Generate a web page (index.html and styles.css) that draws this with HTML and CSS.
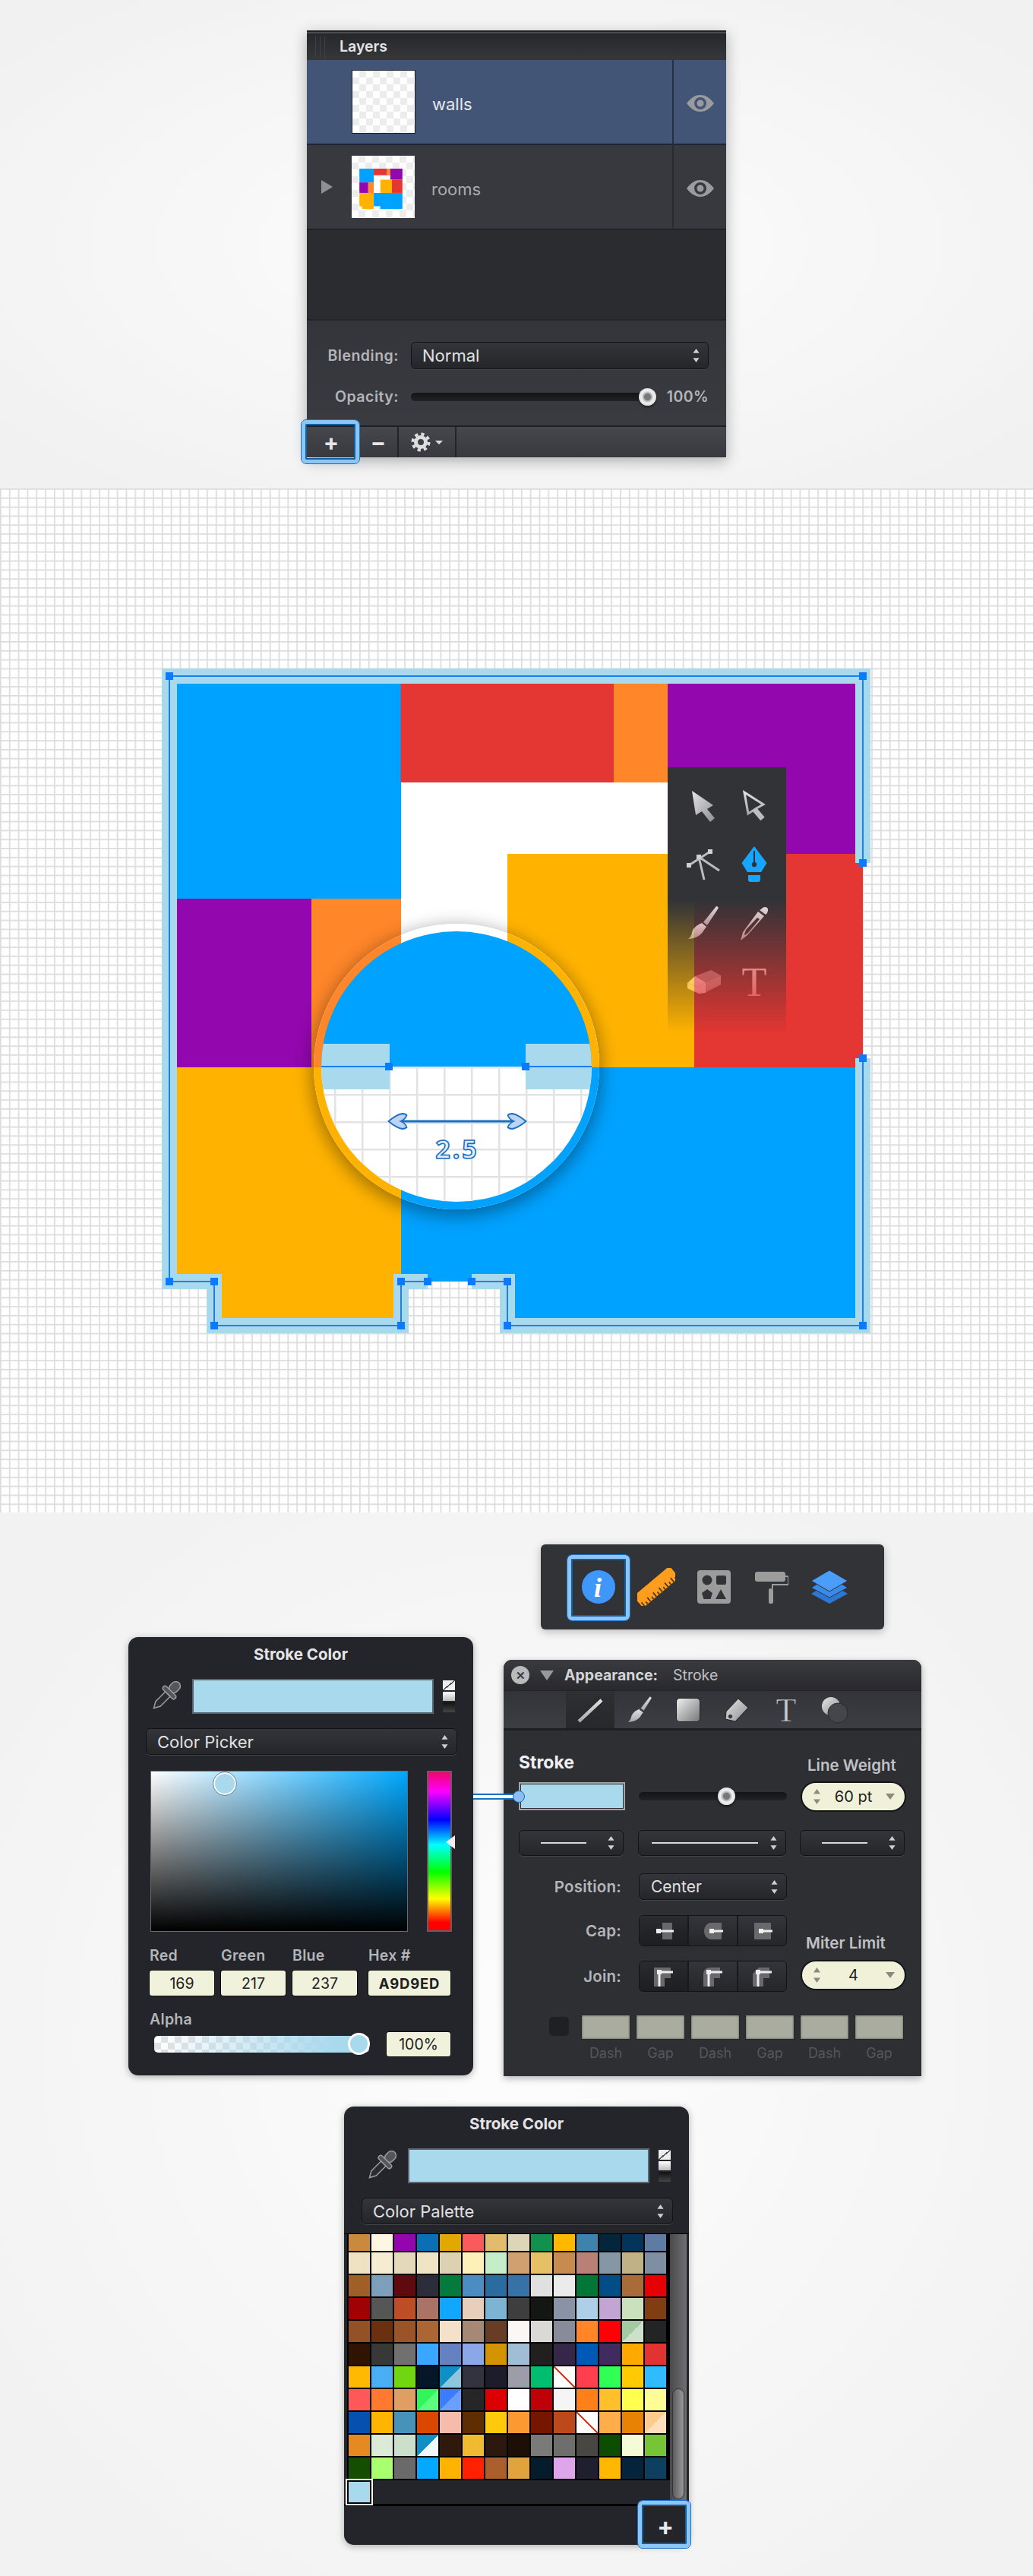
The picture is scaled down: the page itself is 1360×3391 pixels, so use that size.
FILE: index.html
```html
<!DOCTYPE html>
<html lang="en">
<head>
    <meta charset="UTF-8">
    <title>Floor plan walls</title>
    <link rel="stylesheet" href="styles.css">
</head>
<body>
    <svg class="defs" width="0" height="0">
        <symbol id="updown" viewBox="0 0 10 20"><path d="M5 0l4.500 6.500h-9zM5 20l-4.500-6.500h9z"/></symbol>
        <symbol id="dropper" viewBox="0 0 40 40">
            <g transform="rotate(45 20 20)">
                <rect x="14" y="-5" width="12" height="16" rx="6" fill="#55565b" stroke="#9a9ba0" stroke-width="1.500"/>
                <rect x="9" y="10" width="22" height="6" rx="3" fill="#55565b" stroke="#9a9ba0" stroke-width="1.500"/>
                <path d="M15.500 16h9v18l-4.500 8-4.500-8z" fill="#2a2b30" stroke="#9a9ba0" stroke-width="1.500"/>
            </g>
        </symbol>
        <symbol id="eye" viewBox="0 0 36 22">
            <path fill-rule="evenodd" fill="#9a9b9e" d="M0 11C6 3 12 0 18 0s12 3 18 11c-6 8-12 11-18 11S6 19 0 11zm18-8a8 8 0 1 0 0 16 8 8 0 0 0 0-16zm0 3.500a4.500 4.500 0 1 1 0 9 4.500 4.500 0 0 1 0-9z"/>
        </symbol>
        <linearGradient id="steel" x1="0" y1="0" x2="1" y2="1"><stop offset="0" stop-color="#e4e4e4"/><stop offset="1" stop-color="#8f8f92"/></linearGradient>
        <linearGradient id="steel-up" x1="0" y1="0" x2="0" y2="1"><stop offset="0" stop-color="#e0e0e0"/><stop offset="1" stop-color="#a8a8aa"/></linearGradient>
    </svg>

    <section class="top">
        <div class="layers">
            <div class="layers-title"><span class="grip"></span>Layers</div>
            <div class="layer-row selected">
                <span class="disclosure"></span>
                <span class="thumb"></span>
                <span class="layer-name">walls</span>
                <span class="eye-cell"><svg class="eye"><use href="#eye"/></svg></span>
            </div>
            <div class="layer-row">
                <span class="disclosure"><i></i></span>
                <span class="thumb thumb-rooms">
                    <svg viewBox="223 890 913 855" width="57" height="53"><use href="#room-fills"/></svg>
                </span>
                <span class="layer-name dim">rooms</span>
                <span class="eye-cell"><svg class="eye"><use href="#eye"/></svg></span>
            </div>
            <div class="layers-empty"></div>
            <div class="blend">
                <label>Blending:</label>
                <div class="select blend-select">Normal<svg class="updown"><use href="#updown"/></svg></div>
                <label>Opacity:</label>
                <div class="opacity">
                    <div class="track opacity-track"><span class="knob"></span></div>
                    <span class="percent">100%</span>
                </div>
            </div>
            <div class="layers-tools">
                <div class="tool-btn plus-btn"><span>+</span><span class="focus-ring"></span></div>
                <div class="tool-btn minus-btn">−</div>
                <div class="tool-btn gear-btn">
                    <svg width="26" height="26" viewBox="0 0 26 26">
                        <circle cx="13" cy="13" r="6.500" fill="none" stroke="#ddd" stroke-width="5"/>
                        <circle cx="13" cy="13" r="10.500" fill="none" stroke="#ddd" stroke-width="4" stroke-dasharray="4.200 4.050"/>
                    </svg>
                    <i class="caret"></i>
                </div>
            </div>
        </div>
    </section>

    <section class="canvas">
        <svg class="plan" width="1360" height="1348" viewBox="0 643 1360 1348">
            <defs>
                <pattern id="grid" x="0" y="643" width="11.826" height="11.826" patternUnits="userSpaceOnUse">
                    <path d="M0 0H11.826M0 0V11.826" fill="none" stroke="#dcdcde" stroke-width="3.400"/>
                </pattern>
                <pattern id="grid-big" x="512" y="1404" width="36" height="36" patternUnits="userSpaceOnUse">
                    <path d="M0 0H36M0 0V36" fill="none" stroke="#e3e3e6" stroke-width="5"/>
                </pattern>
                <clipPath id="lens-outer"><circle cx="601" cy="1404" r="188"/></clipPath>
                <clipPath id="lens-inner"><circle cx="601" cy="1404" r="178"/></clipPath>
                <filter id="lens-shadow" x="-30%" y="-30%" width="160%" height="160%">
                    <feGaussianBlur stdDeviation="12"/>
                </filter>
                <g id="room-fills">
                    <rect x="527" y="1030" width="360" height="380" fill="#fff"/>
                    <rect x="223" y="890" width="305" height="293" fill="#00a2ff"/>
                    <rect x="527.500" y="890" width="281" height="140" fill="#e43632"/>
                    <rect x="808" y="890" width="71" height="140" fill="#ff8629"/>
                    <rect x="879" y="890" width="257" height="234" fill="#9307ae"/>
                    <rect x="668" y="1124" width="246" height="281" fill="#ffb300"/>
                    <rect x="914" y="1124" width="222" height="281" fill="#e43632"/>
                    <rect x="223" y="1183" width="187" height="222" fill="#9307ae"/>
                    <rect x="410" y="1183" width="118" height="222" fill="#ff8629"/>
                    <path d="M223 1405H528V1745H282V1687H223z" fill="#ffb300"/>
                    <path d="M528 1405H1136V1745H668V1687H528z" fill="#00a2ff"/>
                </g>
            </defs>
            <rect x="0" y="643" width="1360" height="1348" fill="#fff"/>
            <rect x="0" y="643" width="1360" height="1348" fill="url(#grid)"/>
            <use href="#room-fills"/>
            <g class="wall-stroke">
                <path d="M563 1687H528V1745H282V1687H223V890H1136V1136"/>
                <path d="M621 1687H668V1745H1136V1393"/>
            </g>
            <g class="wall-line">
                <path d="M563 1687H528V1745H282V1687H223V890H1136V1136"/>
                <path d="M621 1687H668V1745H1136V1393"/>
            </g>
            <g class="handles">
                <rect x="218" y="885"/><rect x="1131" y="885"/><rect x="1131" y="1131"/><rect x="1131" y="1388"/>
                <rect x="218" y="1682"/><rect x="277" y="1682"/><rect x="277" y="1740"/><rect x="523" y="1740"/>
                <rect x="523" y="1682"/><rect x="558" y="1682"/><rect x="616" y="1682"/><rect x="663" y="1682"/>
                <rect x="663" y="1740"/><rect x="1131" y="1740"/>
            </g>

            <circle cx="601" cy="1410" r="190" fill="#000" opacity=".38" filter="url(#lens-shadow)"/>
            <g clip-path="url(#lens-outer)">
                <rect x="400" y="1200" width="400" height="400" fill="#fff"/>
                <use href="#room-fills"/>
            </g>
            <g clip-path="url(#lens-inner)">
                <rect x="420" y="1220" width="362" height="184" fill="#00a2ff"/>
                <rect x="420" y="1404" width="362" height="184" fill="#fff"/>
                <rect x="420" y="1404" width="362" height="184" fill="url(#grid-big)"/>
                <rect x="420" y="1374" width="93" height="60" fill="#a9d9ed"/>
                <rect x="692" y="1374" width="90" height="60" fill="#a9d9ed"/>
                <path d="M420 1404H513M692 1404H782" stroke="#1a7ff0" stroke-width="2"/>
            </g>
            <g class="handles">
                <rect x="507" y="1399"/><rect x="687" y="1399"/>
            </g>
            <g class="measure">
                <path class="measure-glow" d="M525 1478.500H680"/>
                <path class="measure-bar" d="M525 1476H680"/>
                <path class="measure-head" d="M511.500 1476c6-5 12-9 18-10 3 0 5 1 6 2-1 3-3 6-8 8 5 2 7 5 8 8-1 1-3 2-6 2-6-1-12-5-18-10z"/>
                <path class="measure-head" d="M692.500 1476c-6-5-12-9-18-10-3 0-5 1-6 2 1 3 3 6 8 8-5 2-7 5-8 8 1 1 3 2 6 2 6-1 12-5 18-10z"/>
                <text class="measure-text" x="602" y="1525" text-anchor="middle">2.5</text>
            </g>
        </svg>

        <div class="tools-float">
            <svg viewBox="0 0 48 48"><path fill="url(#steel)" d="M9 4l28 19-8 5 10 12-6 5-11-14-8 5z"/></svg>
            <svg viewBox="0 0 48 48"><path fill="none" stroke="url(#steel-up)" stroke-width="3" d="M11 6l25 16-9 5-11 7z"/><path fill="none" stroke="#bdbdbd" stroke-width="7" d="M24 28l11 13"/></svg>
            <svg viewBox="0 0 48 48">
                <g stroke="#bcbcbe" stroke-width="3" fill="none"><path d="M5 25L33 7M18 14l7 30M18 14l27 18"/></g>
                <g fill="#d0d0d0"><rect x="2" y="22" width="6" height="6"/><rect x="30" y="4" width="6" height="6"/><rect x="15" y="11" width="6" height="6"/></g>
            </svg>
            <svg viewBox="0 0 48 48">
                <path fill="#16a6ff" d="M24 0l16.500 22L33 34H15L7.500 22z"/>
                <path stroke="#323337" stroke-width="2" d="M24 6v16"/>
                <circle cx="24" cy="24" r="3.200" fill="#323337"/>
                <path fill="#16a6ff" d="M16 38h16v6a3 3 0 0 1-3 3H19a3 3 0 0 1-3-3z"/>
            </svg>
            <svg viewBox="0 0 48 48">
                <path fill="url(#steel-up)" d="M41 2c2 0 3 1 2.500 3L29 27l-5-4z"/>
                <path fill="url(#steel-up)" d="M22 24l6 5-3 4c-2 4-6 8-11 10-3 1-7 2-10 2 3-2 4-4 5-8 1-6 6-10 13-13z"/>
            </svg>
            <svg viewBox="0 0 48 48">
                <path fill="url(#steel-up)" fill-rule="evenodd" d="M33 6c2-3 6-4 8-2s1 6-1 8l-1 1-8-6zM29 9l8 6-22 25-9 7 3-11zM13 33l-2 6 1 1 4-3 15-18-3-2z"/>
            </svg>
            <svg viewBox="0 0 48 48">
                <path fill="#8d8d90" d="M13 17l21-8 13 7-20 9z"/>
                <path fill="#a5a5a7" d="M27 25l20-9v12l-21 11z"/>
                <path fill="#ededed" d="M3 26l10-9 14 8-9 7z"/>
                <path fill="#f2f2f2" d="M3 26l15 6v8L3 33zM18 32l9-7v14l-9 1z"/>
            </svg>
            <svg viewBox="0 0 48 48"><text class="serif-t" x="24" y="43" text-anchor="middle">T</text></svg>
        </div>
    </section>

    <section class="bottom">
        <div class="app-bar">
            <div class="app-item">
                <span class="focus-ring app-focus"></span>
                <svg width="44" height="44" viewBox="0 0 44 44">
                    <circle cx="22" cy="22" r="22" fill="#3f97fc"/>
                    <text class="info-i" x="21" y="35" text-anchor="middle">i</text>
                </svg>
            </div>
            <div class="app-item">
                <svg width="50" height="50" viewBox="0 0 50 50">
                    <g transform="rotate(-40 25 25)">
                        <rect x="-6" y="15" width="62" height="20" fill="#ff9d1f"/>
                        <path d="M-3 35V28M2 35V31M7 35V28M12 35V31M17 35V28M22 35V31M27 35V28M32 35V31M37 35V28M42 35V31M47 35V28M52 35V31" stroke="#513a1a" stroke-width="1.800"/>
                    </g>
                </svg>
            </div>
            <div class="app-item">
                <svg width="44" height="44" viewBox="0 0 44 44">
                    <rect width="44" height="44" rx="4" fill="#9c9c9d"/>
                    <g fill="#323337">
                        <circle cx="13" cy="13" r="6.500"/>
                        <rect x="25" y="7" width="13" height="12" rx="2"/>
                        <path d="M13 25l7 5-2.500 8h-9L6 30z"/>
                        <path d="M31 25l7 13H24z"/>
                    </g>
                </svg>
            </div>
            <div class="app-item">
                <svg width="44" height="44" viewBox="0 0 44 44">
                    <rect x="0" y="2" width="40" height="13" rx="3" fill="#9c9c9d"/>
                    <path d="M40 8h2a2 2 0 0 1 2 2v7a2 2 0 0 1-2 2H23v5" fill="none" stroke="#9c9c9d" stroke-width="2"/>
                    <rect x="18" y="24" width="6" height="20" rx="2" fill="#9c9c9d"/>
                </svg>
            </div>
            <div class="app-item">
                <svg width="48" height="44" viewBox="0 0 48 44">
                    <path fill="#2b78d6" d="M24 16l24 15-24 13L0 31z"/>
                    <path fill="#3a8ae8" stroke="#323337" d="M24 8l24 15-24 13L0 23z"/>
                    <path fill="#4a9dfb" stroke="#323337" d="M24 0l24 14-24 14L0 14z"/>
                </svg>
            </div>
        </div>

        <div class="panels">
            <div class="picker">
                <h2 class="picker-title">Stroke Color</h2>
                <div class="well-row">
                    <svg class="dropper"><use href="#dropper"/></svg>
                    <div class="well"></div>
                    <div class="mini">
                        <span class="mini-none"></span><span class="mini-white"></span><span class="mini-black"></span>
                    </div>
                </div>
                <div class="select picker-select">Color Picker<svg class="updown"><use href="#updown"/></svg></div>
                <div class="spectrum">
                    <div class="sat"><span class="sat-knob"></span></div>
                    <div class="hue"><i></i></div>
                </div>
                <div class="fields">
                    <label>Red</label><label>Green</label><label>Blue</label><label>Hex #</label>
                    <div class="input">169</div><div class="input">217</div><div class="input">237</div><div class="input hex">A9D9ED</div>
                </div>
                <label class="alpha-label">Alpha</label>
                <div class="alpha-row">
                    <div class="alpha-track"><span class="alpha-knob"></span></div>
                    <div class="input alpha-input">100%</div>
                </div>
            </div>

            <div class="appearance">
                <div class="app-title">
                    <span class="close">✕</span>
                    <i class="tri-down"></i>
                    <b>Appearance:</b>
                    <span>Stroke</span>
                </div>
                <div class="tabs">
                    <div class="tab active"><svg width="36" height="36" viewBox="0 0 36 36"><path d="M3 33L33 5" stroke="#222" stroke-width="7"/><path d="M3 33L33 5" stroke="url(#steel-up)" stroke-width="4.500"/></svg></div>
                    <div class="tab"><svg width="38" height="38" viewBox="0 0 48 48"><path fill="url(#steel-up)" d="M41 2c2 0 3 1 2.500 3L31 25l-5-4z"/><path fill="url(#steel-up)" d="M22 22l8 6-3 4c-2 5-6 8-11 10-3 1-7 2-11 2 3-2 4-4 5-8 2-7 7-11 14-14z"/></svg></div>
                    <div class="tab"><span class="fill-tile"></span></div>
                    <div class="tab"><svg width="36" height="36" viewBox="0 0 36 36"><path fill="url(#steel)" stroke="#222" d="M20 3l13 12-17 18L3 30l1-10zM8 25a2 2 0 1 0 3 3 2 2 0 0 0-3-3z" fill-rule="evenodd"/></svg></div>
                    <div class="tab"><svg width="36" height="36" viewBox="0 0 36 36"><text class="serif-tab" x="18" y="33" text-anchor="middle">T</text></svg></div>
                    <div class="tab"><svg width="38" height="38" viewBox="0 0 38 38"><circle cx="14" cy="14" r="12" fill="url(#steel)"/><circle cx="23" cy="23" r="13" fill="#45464a" stroke="#2a2b2f"/></svg></div>
                </div>
                <div class="app-body">
                    <div class="row row-heads">
                        <b class="stroke-head">Stroke</b>
                        <b class="weight-head">Line Weight</b>
                    </div>
                    <div class="row row-stroke">
                        <div class="stroke-well"></div>
                        <div class="track stroke-track"><span class="knob"></span></div>
                        <div class="pill"><svg class="updown"><use href="#updown"/></svg><span>60 pt</span><i></i></div>
                    </div>
                    <div class="row row-lines">
                        <div class="select short"><span class="dash-sample"></span><svg class="updown"><use href="#updown"/></svg></div>
                        <div class="select wide"><span class="dash-sample long"></span><svg class="updown"><use href="#updown"/></svg></div>
                        <div class="select short"><span class="dash-sample"></span><svg class="updown"><use href="#updown"/></svg></div>
                    </div>
                    <div class="row row-position">
                        <label class="side-label">Position:</label>
                        <div class="select wide center-select">Center<svg class="updown"><use href="#updown"/></svg></div>
                    </div>
                    <div class="row row-caps">
                        <div class="caps">
                            <div class="cap-row">
                                <label class="side-label">Cap:</label>
                                <div class="segments">
                                    <div class="segment on"><svg width="30" height="26" viewBox="0 0 30 26"><rect x="13" y="2" width="13" height="22" fill="#69696b"/><path d="M8 13h20" stroke="#eee" stroke-width="3"/><rect x="5" y="10" width="6" height="6" fill="#eee"/></svg></div>
                                    <div class="segment"><svg width="30" height="26" viewBox="0 0 30 26"><path d="M26 2H13C6 2 3 8 3 13s3 11 10 11h13z" fill="#69696b"/><path d="M14 13h14" stroke="#eee" stroke-width="3"/><rect x="10" y="10" width="6" height="6" fill="#eee"/></svg></div>
                                    <div class="segment"><svg width="30" height="26" viewBox="0 0 30 26"><rect x="4" y="2" width="22" height="22" fill="#69696b"/><path d="M14 13h14" stroke="#eee" stroke-width="3"/><rect x="10" y="10" width="6" height="6" fill="#eee"/></svg></div>
                                </div>
                            </div>
                            <div class="cap-row join-row">
                                <label class="side-label">Join:</label>
                                <div class="segments">
                                    <div class="segment on"><svg width="30" height="30" viewBox="0 0 30 30"><path d="M2 3h22v14H16v11H2z" fill="#69696b"/><path d="M9 28V9h18" fill="none" stroke="#eee" stroke-width="3"/><rect x="6" y="6" width="6" height="6" fill="#eee"/></svg></div>
                                    <div class="segment"><svg width="30" height="30" viewBox="0 0 30 30"><path d="M2 28V12c0-6 4-9 9-9h13v14h-8v11z" fill="#69696b"/><path d="M9 28V9h18" fill="none" stroke="#eee" stroke-width="3"/><rect x="6" y="6" width="6" height="6" fill="#eee"/></svg></div>
                                    <div class="segment"><svg width="30" height="30" viewBox="0 0 30 30"><path d="M2 28V11l8-8h14v14h-8v11z" fill="#69696b"/><path d="M9 28V9h18" fill="none" stroke="#eee" stroke-width="3"/><rect x="6" y="6" width="6" height="6" fill="#eee"/></svg></div>
                                </div>
                            </div>
                        </div>
                        <div class="miter">
                            <b class="weight-head">Miter Limit</b>
                            <div class="pill"><svg class="updown"><use href="#updown"/></svg><span>4</span><i></i></div>
                        </div>
                    </div>
                    <div class="row row-dashes">
                        <span class="dash-check"></span>
                        <div class="dash-grid">
                            <div><span class="dash-box"></span>Dash</div>
                            <div><span class="dash-box"></span>Gap</div>
                            <div><span class="dash-box"></span>Dash</div>
                            <div><span class="dash-box"></span>Gap</div>
                            <div><span class="dash-box"></span>Dash</div>
                            <div><span class="dash-box"></span>Gap</div>
                        </div>
                    </div>
                </div>
            </div>
            <span class="connector"></span>
        </div>

        <div class="picker palette-picker">
            <h2 class="picker-title">Stroke Color</h2>
            <div class="well-row">
                <svg class="dropper"><use href="#dropper"/></svg>
                <div class="well"></div>
                <div class="mini">
                    <span class="mini-none"></span><span class="mini-white"></span><span class="mini-black"></span>
                </div>
            </div>
            <div class="select picker-select">Color Palette<svg class="updown"><use href="#updown"/></svg></div>
            <div class="palette">
                <div class="palette-main">
                    <div class="swatches" id="swatches"></div>
                    <div class="picked"></div>
                </div>
                <div class="scrollbar"><span></span></div>
            </div>
            <div class="palette-foot">
                <div class="foot-plus"><span>+</span><span class="focus-ring"></span></div>
            </div>
        </div>
    </section>

    <script>
        const colors = [
            '#c98a3e','#fdf6e3','#9306ad','#0a6fb5','#e0a800','#fa5a5a','#e3bb6d','#ddd5b8','#12914e','#ffb800','#3f82ab','#04263d','#04345a','#5d7ba3',
            '#efe2c2','#f6ecd2','#e4dabb','#efe4c3','#dcd2b2','#fff0b8','#c5eec8','#d1a070','#e6c065','#c78a4f','#b98078','#8596a5','#c0b186','#7d8fa0',
            '#a05f27','#7d9fbc','#5e0a0e','#2b2d3a','#047a3c','#4b8dc2','#2a6ba0','#3672a5','#e0e0e0','#ebebeb','#027636','#034d87','#a96c38','#e60003',
            '#a00203','#565656','#bc4d26','#ab7266','#11a6ff','#e8cfbc','#7db4d3','#3e3e3e','#141614','#8a92a5','#add0e8','#c3a5d5','#cbe0bc','#7e3e12',
            '#935126','#6b3010','#9a5428','#ab6633','#f5e0ca','#a58974','#673e25','#faf7f4','#dbd9d6','#888b9a','#ff8527','#ff0006','#a3cba3/#cde0ca','#222425',
            '#301300','#383838','#707070','#3aa6ff','#6481c2','#8aa8e8','#d49300','#9fbdd5','#22201e','#362648','#0059b5','#412a5e','#ffa800','#e33232',
            '#ffb900','#4aaef5','#6fd610','#051726','#0e90c6/#8fc5dd','#33323f','#1c1c2a','#9c9da8','#00bd70','none','#ff3f50','#32ff55','#ffcb00','#30baff',
            '#ff5858','#ff7a2f','#e09e62','#32f558/#5bff7d','#3a7dff/#6a9fff','#262626','#dc0000','#ffffff','#c00008','#f5f5f5','#ff8018','#ffc02c','#ffff50','#fdfd96',
            '#0650b0','#ffb400','#4692b8','#dc4700','#f6bcab','#5e2d00','#ffc90c','#fb9a31','#771600','#bd481a','none','#ffac4a','#e88207','#ffcb8c/#fedfbb',
            '#e48a21','#dcebd8','#cbdfcb','#0e90c6/#f0f8fb','#2f190c','#f0bb30','#2c180e','#1e0f06','#7a7a78','#6e6e6c','#494742','#0c4d00','#f3fbd7','#76c536',
            '#144e00','#a8ff70','#6a6a6a','#03a8ff','#ffb300','#ff2100','#aa5f2c','#e1a43c','#041c2c','#dfa5eb','#1f1f30','#ffb700','#03243a','#0d4060'
        ];

        const swatches = document.getElementById('swatches');
        colors.forEach(function (color) {
            const cell = document.createElement('span');
            if (color === 'none') {
                cell.className = 'swatch-none';
            } else if (color.includes('/')) {
                const parts = color.split('/');
                cell.style.background = `linear-gradient(to bottom right, ${parts[0]} 50%, ${parts[1]} 50%)`;
            } else {
                cell.style.background = color;
            }
            swatches.appendChild(cell);
        });
    </script>
</body>
</html>
```

FILE: styles.css
```css
* {
    box-sizing: border-box;
}
body {
    margin: 0;
    width: 1360px;
    font-family: Inter, "Liberation Sans", sans-serif;
    color: #d8d8da;
}
.defs {
    position: absolute;
}
label {
    font-weight: 600;
    color: #b4b5b9;
}

/* layers panel */
.top {
    height: 643px;
    padding-top: 40px;
    display: flex;
    justify-content: center;
    align-items: flex-start;
    background: radial-gradient(ellipse at center, #fdfdfd, #f1f1f1 90%);
}
.layers {
    width: 552px;
    height: 562px;
    background: #2b2c30;
    box-shadow: 0 5px 18px rgba(0, 0, 0, 0.3);
}
.layers-title {
    height: 39px;
    display: flex;
    align-items: center;
    padding-left: 43px;
    position: relative;
    font-size: 19.500px;
    font-weight: 600;
    color: #e4e4e6;
    background: linear-gradient(#26272b, #36373b);
    border-top: 2px solid #202124;
    box-shadow: inset 0 2px 0 #4a4b4f;
}
.grip {
    position: absolute;
    left: 11px;
    top: 6px;
    width: 18px;
    height: 28px;
    background: repeating-linear-gradient(90deg, #3f4044 0 1px, transparent 1px 6px);
}
.layer-row {
    height: 112px;
    display: flex;
    align-items: center;
    background: #38393e;
    border-bottom: 2px solid #232428;
}
.layer-row.selected {
    background: #425577;
    border-bottom-color: #1d2638;
}
.disclosure {
    width: 59px;
    padding-left: 19px;
    display: flex;
}
.disclosure i {
    border-left: 15px solid #8f9093;
    border-top: 9px solid transparent;
    border-bottom: 9px solid transparent;
}
.thumb {
    width: 84px;
    height: 84px;
    border: 1px solid #1f2024;
    background-color: #fff;
    background-image: conic-gradient(#ececec 25%, transparent 0 50%, #ececec 0 75%, transparent 0);
    background-size: 18px 18px;
}
.thumb-rooms {
    border: 0;
    width: 83px;
    height: 82px;
    display: flex;
    padding: 17px 0 0 10px;
}
.layer-name {
    margin: 5px 0 0 22px;
    font-size: 22px;
    color: #e6e7ea;
}
.layer-name.dim {
    color: #a9aaad;
}
.eye-cell {
    margin-left: auto;
    width: 71px;
    align-self: stretch;
    padding-top: 3px;
    border-left: 2px solid #2a2b2f;
    display: flex;
    align-items: center;
    justify-content: center;
}
.selected .eye-cell {
    border-left-color: #253047;
}
.eye {
    width: 36px;
    height: 22px;
}
.layers-empty {
    height: 119px;
    border-bottom: 2px solid #232428;
}
.blend {
    height: 138px;
    padding: 28px 0 0 0;
    display: grid;
    grid-template-columns: 121px 392px;
    grid-template-rows: 36px 22px;
    column-gap: 16px;
    row-gap: 25px;
    align-items: center;
    background: linear-gradient(#34353a, #3a3b40);
}
.blend label {
    text-align: right;
    font-size: 19.500px;
    letter-spacing: 0.5px;
}
.select {
    position: relative;
    display: flex;
    align-items: center;
    background: linear-gradient(#34353a, #25262a);
    border: 1px solid #121316;
    border-radius: 6px;
    color: #e0e0e2;
    font-size: 22px;
    box-shadow: 0 1px 0 #45464a;
}
.blend-select {
    height: 36px;
    padding-left: 14px;
}
.updown {
    position: absolute;
    right: 11px;
    top: 50%;
    width: 9px;
    height: 20px;
    margin-top: -10px;
    fill: #cfcfd1;
}
.opacity {
    display: flex;
    align-items: center;
    justify-content: space-between;
}
.track {
    position: relative;
    height: 11px;
    border-radius: 6px;
    background: linear-gradient(#121315, #222327);
}
.opacity-track {
    width: 312px;
}
.knob {
    position: absolute;
    top: 50%;
    width: 23px;
    height: 23px;
    margin-top: -11.500px;
    border-radius: 50%;
    background: radial-gradient(circle, #77787a 0 4px, #a9a9ab 5px, #f0f0f0 8px, #c9c9c9);
    box-shadow: 0 2px 3px rgba(0, 0, 0, 0.5);
}
.opacity-track .knob {
    right: -11px;
}
.percent {
    font-size: 19.500px;
    font-weight: 600;
    color: #b4b5b9;
    letter-spacing: 0.4px;
}
.layers-tools {
    height: 42px;
    display: flex;
    background: linear-gradient(#46474c, #38393e);
    border-top: 2px solid #1f2023;
}
.tool-btn {
    position: relative;
    height: 40px;
    display: flex;
    align-items: center;
    justify-content: center;
    color: #e6e6e8;
    font-size: 30px;
    line-height: 40px;
    font-weight: 700;
    border-right: 2px solid #232428;
}
.plus-btn {
    width: 69px;
    border-right: 0;
    padding-right: 5px;
}
.minus-btn {
    width: 52px;
}
.gear-btn {
    width: 76px;
    gap: 6px;
}
.caret {
    border-top: 5px solid #ddd;
    border-left: 5px solid transparent;
    border-right: 5px solid transparent;
}
.focus-ring {
    position: absolute;
    left: -7px;
    right: 0;
    top: -9px;
    bottom: -8px;
    border: 5px solid #8cc6f8;
    border-radius: 6px;
    outline: 1.500px solid #1a70c4;
    box-shadow: inset 0 0 0 2px #14609f;
}

/* drawing */
.canvas {
    position: relative;
    height: 1348px;
}
.plan {
    display: block;
}
.wall-stroke path {
    fill: none;
    stroke: #a9d9ed;
    stroke-width: 20;
}
.wall-line path {
    fill: none;
    stroke: #1a7ff0;
    stroke-width: 2;
}
.handles rect {
    width: 10px;
    height: 10px;
    fill: #0a7bff;
}
.measure-bar {
    stroke: #1a6fc0;
    stroke-width: 3;
}
.measure-glow {
    stroke: #d5e4f7;
    stroke-width: 3;
}
.measure-head {
    fill: #bcd3f3;
    stroke: #1a6fc0;
    stroke-width: 1.800;
}
.measure-text {
    font-family: "Open Sans", sans-serif;
    font-size: 34px;
    font-weight: 700;
    letter-spacing: 3px;
    fill: #dcedfb;
    stroke: #1a6fc0;
    stroke-width: 1.600;
}
.tools-float {
    position: absolute;
    left: 879px;
    top: 367px;
    width: 156px;
    height: 350px;
    padding: 12px 0 0 13px;
    display: grid;
    grid-template-columns: repeat(2, 67px);
    grid-auto-rows: 77px;
    align-items: center;
    justify-items: center;
    background: #323337;
    box-shadow: 0 0 14px rgba(0, 0, 0, 0.25);
    -webkit-mask-image: linear-gradient(#000 50%, transparent 100%);
    mask-image: linear-gradient(#000 50%, transparent 100%);
}
.tools-float svg {
    width: 48px;
    height: 48px;
}
.serif-t {
    font-family: "Liberation Serif", serif;
    font-size: 54px;
    fill: #e0e0e0;
}
.serif-tab {
    font-family: "Liberation Serif", serif;
    font-size: 44px;
    fill: #c9c9cb;
    stroke: #222;
    stroke-width: 0.500;
}

/* lower panels */
.bottom {
    height: 1400px;
    padding-top: 42px;
    background: radial-gradient(ellipse at center, #fdfdfd, #f2f2f2 85%);
}
.app-bar {
    width: 452px;
    height: 112px;
    margin-left: 712px;
    padding-left: 38px;
    display: flex;
    background: #323337;
    border-radius: 6px;
    box-shadow: 0 3px 12px rgba(0, 0, 0, 0.25);
}
.app-item {
    position: relative;
    width: 76px;
    display: flex;
    align-items: center;
    justify-content: center;
}
.app-focus {
    left: -3px;
    right: -3px;
    top: 14px;
    bottom: 12px;
}
.info-i {
    font-family: "Liberation Serif", serif;
    font-style: italic;
    font-weight: 700;
    font-size: 36px;
    fill: #fff;
}
.panels {
    position: relative;
    display: flex;
    align-items: flex-start;
    gap: 40px;
    margin: 10px 0 0 169px;
}
.picker {
    width: 454px;
    height: 577px;
    background: #24252a;
    border-radius: 13px;
    box-shadow: 0 2px 10px rgba(0, 0, 0, 0.3);
}
.picker-title {
    margin: 0;
    height: 55px;
    padding-top: 11px;
    text-align: center;
    font-size: 20.500px;
    line-height: 24px;
    font-weight: 700;
    color: #e4e4e6;
}
.well-row {
    height: 46px;
    display: flex;
    align-items: center;
    padding-left: 29px;
}
.dropper {
    width: 40px;
    height: 40px;
}
.well {
    width: 318px;
    height: 46px;
    margin-left: 15px;
    background: #a9d9ed;
    border: 2px solid #5c6570;
}
.mini {
    width: 16px;
    margin-left: 12px;
    display: flex;
    flex-direction: column;
    gap: 2px;
}
.mini span {
    height: 12.500px;
}
.mini-none {
    background: linear-gradient(to top left, #eee 46%, #555 46% 54%, #eee 54%);
}
.mini-white {
    background: linear-gradient(#fff, #bbb);
}
.mini-black {
    background: linear-gradient(#111, #444);
}
.picker-select {
    width: 410px;
    height: 35px;
    margin: 19px 0 0 23px;
    padding-left: 14px;
    font-size: 22px;
}
.spectrum {
    display: flex;
    gap: 25px;
    margin: 21px 0 0 29px;
}
.sat {
    position: relative;
    width: 339px;
    height: 212px;
    border: 1.500px solid #6a6b70;
    background: linear-gradient(to top, #000, rgba(0, 0, 0, 0)), linear-gradient(to right, #fff, #00a8ff);
}
.sat-knob {
    position: absolute;
    left: 82px;
    top: 1px;
    width: 30px;
    height: 30px;
    border-radius: 50%;
    border: 2px solid #fff;
    outline: 1px solid #6a8a9c;
    background: #a9d9ed;
}
.hue {
    position: relative;
    width: 33px;
    height: 212px;
    border: 2px solid #6a5c62;
    background: linear-gradient(#f0056a, #f0f 12%, #00f 30%, #0ff 46%, #0f0 63%, #ff0 80%, #f00 95%);
}
.hue i {
    position: absolute;
    left: 23px;
    top: 83px;
    border-right: 12px solid #eee;
    border-top: 9px solid transparent;
    border-bottom: 9px solid transparent;
}
.fields {
    display: grid;
    grid-template-columns: 85px 85px 85px 108px;
    grid-template-rows: 18px 33px;
    column-gap: 9px;
    row-gap: 11px;
    margin: 22px 0 0 28px;
}
.fields label {
    font-size: 19.500px;
    line-height: 18px;
    letter-spacing: 0.3px;
}
.fields label:last-of-type {
    margin-left: 6px;
}
.input {
    display: flex;
    align-items: center;
    justify-content: center;
    background: #f0f2dc;
    border-radius: 3px;
    color: #202020;
    font-size: 19.500px;
    box-shadow: 0 0 0 1px #111;
}
.fields .hex {
    margin-left: 6px;
    width: 108px;
    font-weight: 700;
    font-size: 18.500px;
    letter-spacing: 0.8px;
}
.alpha-label {
    display: block;
    margin: 22px 0 0 28px;
    font-size: 19.500px;
    line-height: 18px;
    letter-spacing: 0.3px;
}
.alpha-row {
    display: flex;
    align-items: center;
    margin: 8px 0 0 34px;
}
.alpha-track {
    position: relative;
    width: 283px;
    height: 22px;
    border-radius: 5px;
    background-image: linear-gradient(to right, rgba(169, 217, 237, 0), #a9d9ed 85%), conic-gradient(#e2e2e2 25%, #fff 0 50%, #e2e2e2 0 75%, #fff 0);
    background-size: auto, 18px 18px;
}
.alpha-knob {
    position: absolute;
    right: -1px;
    top: -4px;
    width: 29px;
    height: 29px;
    border-radius: 50%;
    background: #a9d9ed;
    border: 3px solid #fff;
}
.alpha-input {
    width: 84px;
    height: 32px;
    margin-left: 23px;
}

/* appearance panel */
.appearance {
    width: 550px;
    height: 548px;
    margin-top: 30px;
    background: #2e2f33;
    border-radius: 11px 11px 0 0;
    box-shadow: 0 3px 10px rgba(0, 0, 0, 0.3);
}
.app-title {
    height: 40px;
    display: flex;
    align-items: center;
    font-size: 19.500px;
    color: #bfc0c3;
    background: linear-gradient(#3a3b3f, #29292d);
    border-radius: 11px 11px 0 0;
}
.app-title b {
    margin: 0 20px 0 14px;
    font-weight: 700;
    color: #d4d5d7;
}
.close {
    width: 24px;
    height: 24px;
    margin-left: 10px;
    border-radius: 50%;
    background: #b9babc;
    color: #3a3b3f;
    font-size: 15px;
    font-weight: 700;
    display: flex;
    align-items: center;
    justify-content: center;
}
.tri-down {
    margin-left: 14px;
    border-top: 13px solid #97989b;
    border-left: 9px solid transparent;
    border-right: 9px solid transparent;
}
.tabs {
    height: 53px;
    padding-left: 82px;
    display: flex;
    background: linear-gradient(#33343a, #3d3e44);
    border-top: 1px solid #232428;
    border-bottom: 3px solid #1e1f22;
}
.tab {
    width: 64.400px;
    display: flex;
    align-items: center;
    justify-content: center;
}
.tab.active {
    background: linear-gradient(#2e2f33, #27282c);
}
.fill-tile {
    width: 32px;
    height: 32px;
    border-radius: 5px;
    border: 1px solid #222;
    background: linear-gradient(135deg, #eee, #77787a);
}
.app-body {
    padding: 29px 0 0 20px;
}
.row {
    display: flex;
    align-items: flex-start;
}
.row-heads {
    height: 29px;
    justify-content: space-between;
    padding-right: 20px;
}
.stroke-head {
    font-size: 23px;
    line-height: 26px;
    font-weight: 700;
    color: #f0f0f2;
}
.weight-head {
    display: block;
    width: 130px;
    font-size: 20.500px;
    line-height: 24px;
    font-weight: 600;
    color: #c0c1c4;
    white-space: nowrap;
}
.row-heads .weight-head {
    margin-top: 5px;
}
.row-stroke {
    margin-top: 10px;
    align-items: center;
}
.stroke-well {
    width: 140px;
    height: 37px;
    background: #a9d9ed;
    border: 3px solid #2e2f33;
    outline: 2px solid #a5a6a8;
    outline-offset: -2px;
}
.stroke-track {
    width: 195px;
    margin: 0 20px 0 18px;
}
.stroke-track .knob {
    left: 104px;
}
.pill {
    position: relative;
    width: 135px;
    height: 36px;
    display: flex;
    align-items: center;
    justify-content: center;
    border-radius: 18px;
    background: #f0f1d8;
    color: #202020;
    font-size: 20px;
    box-shadow: 0 0 0 2px #141518;
}
.pill .updown {
    right: auto;
    left: 14px;
    fill: #8a8b80;
    width: 11px;
}
.pill i {
    position: absolute;
    right: 13px;
    top: 14px;
    border-top: 8px solid #8a8b80;
    border-left: 6px solid transparent;
    border-right: 6px solid transparent;
}
.row-lines {
    margin-top: 26px;
}
.short {
    width: 138px;
    height: 34px;
    padding-left: 28px;
}
.wide {
    width: 195px;
    height: 34px;
    padding-left: 17px;
}
.row-lines .wide {
    margin: 0 18px 0 19px;
}
.dash-sample {
    width: 60px;
    height: 2px;
    background: #d8d8da;
}
.dash-sample.long {
    width: 140px;
}
.row-position {
    margin-top: 23px;
    align-items: center;
}
.side-label {
    width: 135px;
    margin-right: 23px;
    text-align: right;
    font-size: 20.500px;
    letter-spacing: 0.2px;
}
.center-select {
    height: 35px;
    padding-left: 15px;
    font-size: 21px;
}
.row-caps {
    margin-top: 20px;
}
.cap-row {
    display: flex;
    align-items: center;
}
.join-row {
    margin-top: 19px;
}
.segments {
    width: 195px;
    height: 41px;
    display: flex;
    border: 1px solid #121316;
    border-radius: 6px;
    background: linear-gradient(#34353a, #25262a);
    overflow: hidden;
}
.segment {
    flex: 1;
    display: flex;
    align-items: center;
    justify-content: center;
    border-left: 2px solid #18191c;
}
.segment:first-child {
    border-left: 0;
}
.segment.on {
    background: linear-gradient(#2a2b2f, #1d1e21);
}
.miter {
    margin: 25px 0 0 20px;
}
.miter .weight-head {
    margin-left: 5px;
}
.miter .pill {
    margin-top: 12px;
}
.row-dashes {
    margin-top: 31px;
    padding-left: 40px;
}
.dash-check {
    width: 26px;
    height: 25px;
    margin-top: 2px;
    border-radius: 5px;
    background: #1f2024;
}
.dash-grid {
    display: grid;
    grid-template-columns: repeat(6, 63px);
    column-gap: 9px;
    margin-left: 17px;
    font-size: 18px;
    line-height: 20px;
    text-align: center;
    color: #55565a;
}
.dash-box {
    display: block;
    height: 31px;
    margin-bottom: 9px;
    background: #a9ac9e;
    box-shadow: inset 0 0 3px #55564e, 0 0 0 1px #26272a;
}
.connector {
    position: absolute;
    left: 454px;
    top: 206px;
    width: 61px;
    height: 8px;
    background: #fff;
    border-top: 2px solid #1a6fc0;
    border-bottom: 2px solid #1a6fc0;
}
.connector::after {
    content: "";
    position: absolute;
    right: -7px;
    top: -6px;
    width: 14px;
    height: 14px;
    border-radius: 50%;
    background: #8cbcf2;
    border: 1px solid #1a6fc0;
}

/* palette picker */
.palette-picker {
    position: relative;
    margin: 40px 0 0 453px;
}
.palette {
    height: 359px;
    margin-top: 12px;
    display: flex;
    border-top: 1px solid #000;
    border-bottom: 3px solid #000;
}
.palette-main {
    width: 429px;
}
.swatches {
    width: 426px;
    margin-left: 4px;
    padding: 0 2px 2px;
    display: grid;
    grid-template-columns: repeat(14, 28px);
    grid-template-rows: 22px repeat(10, 28px);
    gap: 2px;
    background: #000;
}
.swatch-none {
    background: linear-gradient(to top right, #fff 47%, #e53a1f 47% 53%, #fff 53%);
}
.picked {
    width: 36px;
    height: 35px;
    margin: -2px 0 0 2px;
    background: #a9d9ed;
    border: 2px solid #fff;
    box-shadow: inset 0 0 0 2px #000;
}
.scrollbar {
    width: 22px;
    height: 100%;
    padding: 203px 3px 0;
    background: linear-gradient(90deg, #4a4a4d, #6f6f72);
}
.scrollbar span {
    display: block;
    height: 146px;
    border-radius: 8px;
    background: linear-gradient(90deg, #5d5d60, #99999c);
    border: 1px solid #333;
}
.palette-foot {
    height: 52px;
    display: flex;
    justify-content: flex-end;
    padding-right: 0;
}
.foot-plus {
    position: relative;
    width: 62px;
    display: flex;
    align-items: center;
    justify-content: center;
    font-size: 32px;
    font-weight: 700;
    color: #e8e8ea;
}
.foot-plus .focus-ring {
    left: -5px;
    right: -2px;
    top: -7px;
    bottom: -3px;
}
```
